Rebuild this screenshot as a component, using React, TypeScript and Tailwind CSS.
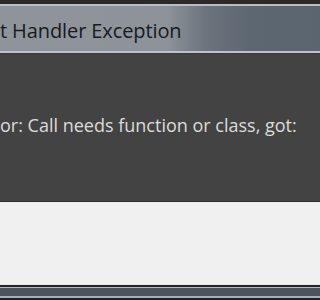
export default function App() {
  return (
    <div className="w-screen h-screen overflow-hidden flex flex-col bg-[#2b2b2b]" style={{ fontFamily: '"Open Sans", "Noto Sans", sans-serif' }}>
      <div className="h-[4px] shrink-0 bg-[#2a2a2a]" />
      <div className="h-[2px] shrink-0 bg-[#b9bdc1]" />
      <div className="h-[45px] shrink-0 flex items-center bg-[linear-gradient(to_right,#8e949a_0%,#8d9398_52%,#6c747d_64%,#5d6772_78%,#5b6570_100%)]">
        <span className="whitespace-nowrap text-[20px] leading-none text-[#171a1f] mt-[4px] tracking-[-0.1px]">
          t Handler Exception
        </span>
      </div>
      <div className="h-[2px] shrink-0 bg-[#bfc3c7]" />
      <div className="h-[1px] shrink-0 bg-[#3a3a3a]" />
      <div className="h-[147px] shrink-0 bg-[#434343] flex flex-col">
        <div className="mt-[62px] whitespace-nowrap text-[18px] leading-none text-[#dcdcdc]">
          or: Call needs function or class, got:
        </div>
      </div>
      <div className="h-[1px] shrink-0 bg-[#2c2c2c]" />
      <div className="h-[83px] shrink-0 bg-[#f0f0f0] border-b border-[#e4e8ec]" />
      <div className="h-[2px] shrink-0 bg-[#22262a]" />
      <div className="h-[1px] shrink-0 bg-[#b2b8be]" />
      <div className="h-[8px] shrink-0 bg-[#4b535b]" />
      <div className="h-[2px] shrink-0 bg-[#a9afb5]" />
      <div className="flex-1 bg-[#1f2327]" />
    </div>
  );
}
